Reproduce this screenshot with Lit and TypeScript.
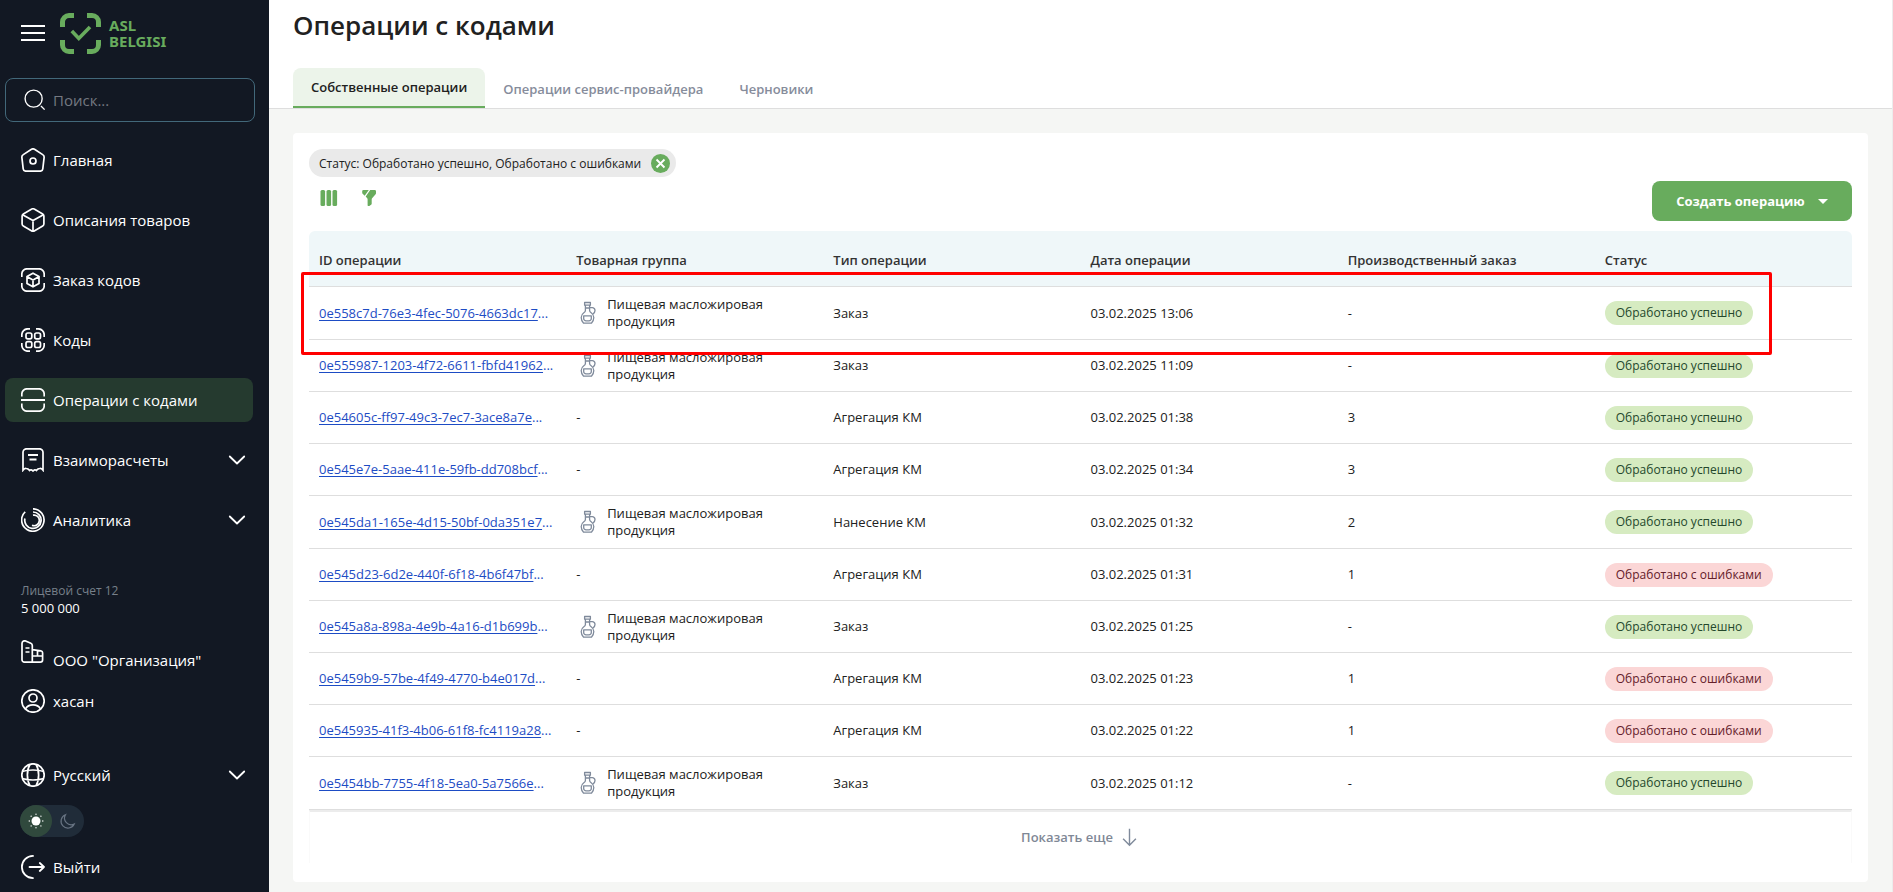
import { LitElement, html, css, svg, TemplateResult } from "lit";
import { customElement, state } from "lit/decorators.js";
import { classMap } from "lit/directives/class-map.js";

interface Operation {
  id: string;
  group: boolean;
  type: string;
  date: string;
  order: string;
  ok: boolean;
}

const OPERATIONS: Operation[] = [
  { id: "0e558c7d-76e3-4fec-5076-4663dc17", group: true, type: "Заказ", date: "03.02.2025 13:06", order: "-", ok: true },
  { id: "0e555987-1203-4f72-6611-fbfd41962", group: true, type: "Заказ", date: "03.02.2025 11:09", order: "-", ok: true },
  { id: "0e54605c-ff97-49c3-7ec7-3ace8a7e", group: false, type: "Агрегация КМ", date: "03.02.2025 01:38", order: "3", ok: true },
  { id: "0e545e7e-5aae-411e-59fb-dd708bcf", group: false, type: "Агрегация КМ", date: "03.02.2025 01:34", order: "3", ok: true },
  { id: "0e545da1-165e-4d15-50bf-0da351e7", group: true, type: "Нанесение КМ", date: "03.02.2025 01:32", order: "2", ok: true },
  { id: "0e545d23-6d2e-440f-6f18-4b6f47bf", group: false, type: "Агрегация КМ", date: "03.02.2025 01:31", order: "1", ok: false },
  { id: "0e545a8a-898a-4e9b-4a16-d1b699b", group: true, type: "Заказ", date: "03.02.2025 01:25", order: "-", ok: true },
  { id: "0e5459b9-57be-4f49-4770-b4e017d", group: false, type: "Агрегация КМ", date: "03.02.2025 01:23", order: "1", ok: false },
  { id: "0e545935-41f3-4b06-61f8-fc4119a28", group: false, type: "Агрегация КМ", date: "03.02.2025 01:22", order: "1", ok: false },
  { id: "0e5454bb-7755-4f18-5ea0-5a7566e", group: true, type: "Заказ", date: "03.02.2025 01:12", order: "-", ok: true },
];

const COLUMNS = ["ID операции", "Товарная группа", "Тип операции", "Дата операции", "Производственный заказ", "Статус"];

const icon = (body: TemplateResult, cls = "icon") =>
  html`<svg class=${cls} viewBox="0 0 24 24" aria-hidden="true">${body}</svg>`;

const corners = svg`<path d="M.8 9V6.8a6 6 0 0 1 6-6H9M15 .8h2.200a6 6 0 0 1 6 6V9M23.200 15v2.200a6 6 0 0 1-6 6H15M9 23.200H6.800a6 6 0 0 1-6-6V15"/>`;

const ICONS = {
  menu: svg`<path stroke-width="2" d="M0 5h24M0 12h24M0 19h24" />`,
  search: svg`<circle cx="10.500" cy="10.500" r="9.300"/><path d="m18.500 18.500 4 4"/>`,
  home: svg`<path d="M10.500 1.300 2.300 6.600a3 3 0 0 0-1.400 3L2.200 20.800a2.800 2.800 0 0 0 2.800 2.400h14a2.800 2.800 0 0 0 2.800-2.400L23.100 9.600a3 3 0 0 0-1.400-3L13.500 1.300a2.800 2.800 0 0 0-3 0Z"/><circle cx="12" cy="13" r="3"/>`,
  box: svg`<path d="M10.800 1.100 2.300 6a2.400 2.400 0 0 0-1.200 2v8a2.400 2.400 0 0 0 1.200 2l8.500 4.900a2.400 2.400 0 0 0 2.400 0l8.500-4.900a2.400 2.400 0 0 0 1.200-2V8a2.400 2.400 0 0 0-1.200-2l-8.500-4.900a2.400 2.400 0 0 0-2.400 0ZM1.600 6.800 12 12.500l10.400-5.700M12 12.500v10.700"/>`,
  order: svg`<path d="M.8 9V6a5.200 5.200 0 0 1 5.200-5.200h12A5.200 5.200 0 0 1 23.200 6v3M.8 15v3A5.200 5.200 0 0 0 6 23.200h12a5.200 5.200 0 0 0 5.200-5.200v-3M12 5.300l6 3.300v6.800l-6 3.400-6-3.400V8.600ZM6.200 8.800 12 12l5.800-3.200M12 12v6.500"/>`,
  codes: svg`${corners}<g><rect x="5" y="5" width="5.800" height="5.800" rx="1.800"/><rect x="13.700" y="5" width="5.800" height="5.800" rx="1.800"/><rect x="5" y="13.700" width="5.800" height="5.800" rx="1.800"/><rect x="13.700" y="13.700" width="5.800" height="5.800" rx="1.800"/></g>`,
  operations: svg`<path d="M.8 8.500V6A5.200 5.200 0 0 1 6 .8h12A5.200 5.200 0 0 1 23.200 6v2.500M.8 15.500V18A5.200 5.200 0 0 0 6 23.200h12a5.200 5.200 0 0 0 5.200-5.200v-2.500"/><path stroke-width="2" d="M0 12h24"/>`,
  receipt: svg`<path d="M5.500.8h13a3.500 3.500 0 0 1 3.500 3.500v17.900q-1.600-2-3.300-1.700-1.800 0-3.300 1.900-1.600-1.500-3.400.6-1.800-2.100-3.400-.6-1.500-1.900-3.300-1.900-1.700-.3-3.300 1.700V4.300A3.500 3.500 0 0 1 5.500.8Z"/><path stroke-width="2" d="M7 7h10M8.500 11.500h7"/>`,
  analytics: svg`<path d="M4.200 3.800A11.200 11.200 0 1 0 12 .8M3.900 10.500A8.200 8.200 0 1 0 12 4M11 17.300A5.300 5.300 0 1 0 12 7.200M12 10"/>`,
  chevron: svg`<path stroke-width="1.800" stroke-linecap="round" stroke-linejoin="round" d="m4.800 8.500 7.200 7 7.200-7"/>`,
  org: svg`<path d="M11.300 22.200V5.500c0-1-.6-1.800-1.500-2.200L4.600 1A2.600 2.600 0 0 0 1 3.400v16.400a2.400 2.400 0 0 0 2.400 2.400h15.800a2.400 2.400 0 0 0 2.400-2.400v-7a2 2 0 0 0-1.700-2l-8.600-1.200M16.500 10.300V16M11.300 16h10M4.500 8h4M4.500 12h4"/>`,
  user: svg`<circle cx="12" cy="12" r="11.200"/><circle cx="12" cy="9" r="4"/><path d="M4.500 19.800c1.400-2.600 4.200-4 7.500-4s6.100 1.400 7.500 4"/>`,
  globe: svg`<circle cx="12" cy="12" r="11.200"/><path d="M9 1.200C5.500 7 5.500 17 9 22.800M15 1.200c3.500 5.800 3.500 15.800 0 21.600M1.200 8.500c6-2 15.600-2 21.600 0M1.200 15.500c6 2 15.600 2 21.600 0"/>`,
  logout: svg`<path stroke-width="1.800" stroke-linecap="round" stroke-linejoin="round" d="M12 .9a11.100 11.100 0 0 0 0 22.200M8.500 12H23M18.800 8l4.200 4-4.200 4"/>`,
  sun: svg`<circle cx="12" cy="12" r="6" fill="#fff" stroke="none"/><path stroke-width="1.800" stroke-linecap="round" d="M12 3v.1M12 21v.1M3 12h.1M21 12h.1M5.500 5.500h.1M18.500 5.500h.1M5.500 18.500h.1M18.500 18.500h.1"/>`,
  moon: svg`<path d="M9 4.500a8.300 8.300 0 1 0 10.500 11.200A8 8 0 0 1 9 4.500Z"/>`,
  columns: svg`<g stroke="none" fill="#68ac5d"><rect x="3.500" y="4" width="4.600" height="16" rx="1.500"/><rect x="9.500" y="4" width="4.600" height="16" rx="1.500"/><rect x="15.500" y="4" width="4.600" height="16" rx="1.500"/></g>`,
  funnel: svg`<path stroke="none" fill="#68ac5d" d="M6.500 4h5.300L7.700 9.700 5.600 7.800Q5.200 7.300 5.200 6.700V5.200Q5.200 4 6.500 4Zm6.700 0h4.500Q19 4 19 5.200v2q0 .6-.4 1.100l-3.500 3.900q-.4.500-.4 1.200v4.300q0 .7-.6 1.100l-1.800 1.200q-1.700.5-1.700-1.100v-5.500q0-.7-.4-1.200l-1.500-1.600Z"/>`,
  oil: svg`<g stroke="#7f8a9b" stroke-width="1.300" stroke-linejoin="round"><path d="M8.600 1.500h5.800v2.700H8.600ZM9.400 4.200v5.200c0 1-.7 1.700-1.600 2.400A6 6 0 0 0 5.200 16.500c0 2.300.9 4.200 2.400 5.700h7.800c1.500-1.500 2.400-3.400 2.400-5.700a6 6 0 0 0-2.600-4.700c-.9-.7-1.600-1.400-1.600-2.400V4.200M9.400 7h4.200"/><path d="M13.800 6.700h2.500A2.700 2.700 0 0 1 19 9.400c0 1.700-.9 2.700-2 3.600M7.700 14.800h7.600v2.700a2.300 2.300 0 0 1-2.300 2.300h-3a2.300 2.300 0 0 1-2.300-2.300Z"/></g>`,
  down: svg`<path stroke="#7f8a9b" stroke-width="1.600" d="M12 2v19M4.700 13.500l7.300 7.300 7.300-7.300"/>`,
};

@customElement("app-root")
export class AppRoot extends LitElement {
  static styles = css`
    :host {
      display: flex;
      min-height: 100vh;
      box-sizing: border-box;
      background: #f5f6f4;
      color: #212121;
      font: 13px/17px "Open Sans", "Noto Sans", sans-serif;
    }
    * { box-sizing: border-box; }
    button, input, select { font: inherit; color: inherit; background: none; border: 0; padding: 0; margin: 0; }
    button { cursor: pointer; }
    a { color: inherit; text-decoration: none; }
    svg { fill: none; stroke: currentColor; stroke-width: 1.700; flex: none; display: block; }
    .icon { width: 24px; height: 24px; }

    .sidebar { width: 269px; flex: none; background: #121823; color: #fff; font-size: 15px; line-height: 24px; }
    .brand { display: flex; align-items: center; height: 66px; padding-left: 21px; gap: 15px; }
    .logo { display: flex; align-items: center; gap: 8px; color: #68ac5d; }
    .mark { width: 41px; height: 41px; }
    .wordmark { display: flex; flex-direction: column; font: 700 15px/16px "Noto Sans", sans-serif; }
    .search { display: flex; align-items: center; gap: 7px; height: 44px; margin: 12px 14px 16px 5px; padding-left: 18px; border: 1px solid #42687a; border-radius: 8px; }
    .search .icon { width: 22px; height: 22px; stroke-width: 1.500; }
    .search input { flex: 1; min-width: 0; outline: 0; }
    .search input::placeholder { color: #747881; opacity: 1; }
    .nav { display: flex; flex-direction: column; gap: 16px; }
    .item { display: flex; align-items: center; gap: 8px; height: 44px; margin: 0 16px 0 5px; padding: 0 4px 0 16px; border-radius: 8px; text-align: left; }
    .item.active { background: #253a2f; }
    .grow { flex: 1; min-width: 0; }
    .account { margin: 40px 0 24px 21px; font-size: 13px; line-height: 16px; }
    .account-name { font-size: 12px; line-height: 18px; color: #77808a; }
    .org { display: flex; gap: 8px; padding-left: 21px; margin-bottom: 7px; }
    .org-name { padding-top: 8px; }
    .language { margin-top: 30px; }
    .language select { appearance: none; }
    .language option { color: #212121; }
    .theme { display: flex; width: 64px; height: 32px; margin: 8px 0 8px 20px; border-radius: 16px; background: #202c39; }
    .knob { display: grid; place-items: center; width: 32px; height: 32px; border-radius: 50%; }
    .knob.on { background: #30493d; }
    .sun { width: 18px; height: 18px; }
    .moon { width: 20px; height: 20px; color: #687483; stroke-width: 1.400; }

    .main { flex: 1; min-width: 0; border-right: 1px solid #ececec; }
    .top { background: #fff; border-bottom: 1px solid #dedede; padding: 9px 24px 0; }
    h1 { margin: 0 0 27px; font-size: 26px; line-height: 32px; font-weight: 600; }
    .tabs { display: flex; }
    .tab { height: 40px; padding: 2px 18px 0; border-radius: 8px 8px 0 0; font-weight: 600; color: #868c9b; }
    .tab.active { padding-top: 0; border-bottom: 2px solid #68ac5d; background: #ecf4ea; color: #212121; }

    .card { margin: 24px 24px 10px; padding: 16px 16px 19px; background: #fff; border-radius: 4px; }
    .chip { display: inline-flex; align-items: center; gap: 10px; height: 28px; padding: 0 6px 0 10px; border-radius: 14px; background: #eaeaea; font-size: 12px; vertical-align: top; }
    .close { width: 19px; height: 19px; border-radius: 50%; background: #68ac5d; color: #fff; }
    .close .icon { width: 19px; height: 19px; stroke-width: 2.400; }
    .toolbar { display: flex; align-items: flex-start; gap: 16px; margin: 4px 0 10px; padding-left: 8px; }
    .tool { margin-top: 5px; }
    .create { display: flex; align-items: center; justify-content: center; gap: 13px; width: 200px; height: 40px; margin-left: auto; border-radius: 8px; background: #68ac5d; color: #fff; font-weight: 700; }
    .caret { width: 10px; height: 5px; fill: #fff; stroke: none; }

    .table-wrap { position: relative; }
    .highlight { position: absolute; left: -8px; right: 80px; top: 41px; height: 83px; border: 3px solid #f00; border-radius: 2px; pointer-events: none; }
    table { width: 100%; table-layout: fixed; border-collapse: separate; border-spacing: 0; }
    th, td { padding: 0 10px; text-align: left; border-bottom: 1px solid #dedede; }
    th { height: 56px; padding-top: 3px; background: #eff7f9; font-weight: 600; color: #333; }
    th:first-child { border-top-left-radius: 6px; }
    th:last-child { border-top-right-radius: 6px; }
    td { height: 52px; }
    tr:first-child td, tr:nth-child(5) td, tr:last-child td { height: 53px; }
    .id { white-space: nowrap; overflow: hidden; color: #1d4cc4; }
    .id a { text-decoration: underline; text-underline-offset: 2px; }
    .group { display: flex; align-items: center; gap: 7px; }
    .badge { display: inline-block; padding: 0 11px; border-radius: 12px; font-size: 12px; line-height: 24px; white-space: nowrap; vertical-align: middle; }
    .badge.ok { background: #d6ebc1; color: #24482c; }
    .badge.fail { background: #fbd6d6; color: #64202a; }
    .more { display: flex; align-items: center; justify-content: center; gap: 6px; width: 100%; height: 53px; color: #7f8896; font-weight: 600; border: 1px solid #fafafa; border-top: 2px solid #ececec; border-bottom: 0; }
    .more .icon { width: 21px; height: 21px; }
  `;

  @state() private tab = 0;
  @state() private dark = false;

  private tabs = ["Собственные операции", "Операции сервис-провайдера", "Черновики"];

  private link(glyph: TemplateResult, label: string, active = false) {
    return html`<a href="#" class=${classMap({ item: true, active })}>${icon(glyph)}<span>${label}</span></a>`;
  }

  private section(glyph: TemplateResult, label: string) {
    return html`<button class="item" aria-expanded="false">${icon(glyph)}<span class="grow">${label}</span>${icon(ICONS.chevron)}</button>`;
  }

  private row(o: Operation) {
    return html`<tr>
      <td><div class="id"><a href="#">${o.id}</a>...</div></td>
      <td>${o.group ? html`<div class="group">${icon(ICONS.oil)}<span>Пищевая масложировая продукция</span></div>` : "-"}</td>
      <td>${o.type}</td>
      <td>${o.date}</td>
      <td>${o.order}</td>
      <td><span class=${classMap({ badge: true, ok: o.ok, fail: !o.ok })}>${o.ok ? "Обработано успешно" : "Обработано с ошибками"}</span></td>
    </tr>`;
  }

  render() {
    return html`
      <aside class="sidebar">
        <div class="brand">
          <button aria-label="Меню">${icon(ICONS.menu)}</button>
          <div class="logo">
            <svg class="mark" viewBox="0 0 41 41" aria-hidden="true">
              <path stroke-width="5" d="M2.500 14V9a6.500 6.500 0 0 1 6.500-6.500h5M27 2.500h5A6.500 6.500 0 0 1 38.500 9v5M38.500 27v5a6.500 6.500 0 0 1-6.500 6.500h-5M14 38.500H9A6.500 6.500 0 0 1 2.500 32v-5"/>
              <path stroke-width="3.600" d="m11.800 18 7 7.500L30 14"/>
            </svg>
            <div class="wordmark"><span>ASL</span><span>BELGISI</span></div>
          </div>
        </div>
        <label class="search">${icon(ICONS.search)}<input type="search" placeholder="Поиск..." aria-label="Поиск"></label>
        <nav class="nav">
          ${this.link(ICONS.home, "Главная")}
          ${this.link(ICONS.box, "Описания товаров")}
          ${this.link(ICONS.order, "Заказ кодов")}
          ${this.link(ICONS.codes, "Коды")}
          ${this.link(ICONS.operations, "Операции с кодами", true)}
          ${this.section(ICONS.receipt, "Взаиморасчеты")}
          ${this.section(ICONS.analytics, "Аналитика")}
        </nav>
        <div class="account"><div class="account-name">Лицевой счет 12</div><div>5 000 000</div></div>
        <a href="#" class="org">${icon(ICONS.org)}<span class="org-name">ООО "Организация"</span></a>
        ${this.link(ICONS.user, "хасан")}
        <label class="item language">${icon(ICONS.globe)}<select class="grow" aria-label="Язык"><option>Русский</option></select>${icon(ICONS.chevron)}</label>
        <button class="theme" role="switch" aria-label="Тёмная тема" aria-checked=${this.dark} @click=${() => (this.dark = !this.dark)}>
          <span class=${classMap({ knob: true, on: !this.dark })}>${icon(ICONS.sun, "sun")}</span>
          <span class=${classMap({ knob: true, on: this.dark })}>${icon(ICONS.moon, "moon")}</span>
        </button>
        ${this.link(ICONS.logout, "Выйти")}
      </aside>
      <main class="main">
        <header class="top">
          <h1>Операции с кодами</h1>
          <div class="tabs" role="tablist">
            ${this.tabs.map((t, i) => html`<button role="tab" aria-selected=${i === this.tab} class=${classMap({ tab: true, active: i === this.tab })} @click=${() => (this.tab = i)}>${t}</button>`)}
          </div>
        </header>
        <section class="card">
          <div class="chip"><span>Статус: Обработано успешно, Обработано с ошибками</span><button class="close" aria-label="Сбросить">${icon(svg`<path d="m7 7 10 10M17 7 7 17"/>`)}</button></div>
          <div class="toolbar">
            <button class="tool" aria-label="Столбцы">${icon(ICONS.columns)}</button>
            <button class="tool" aria-label="Фильтр">${icon(ICONS.funnel)}</button>
            <button class="create">Создать операцию<svg class="caret" viewBox="0 0 8 4" aria-hidden="true"><path d="M0 0h8L4 4Z"/></svg></button>
          </div>
          <div class="table-wrap">
            <table>
              <thead><tr>${COLUMNS.map((c) => html`<th scope="col">${c}</th>`)}</tr></thead>
              <tbody>${OPERATIONS.map((o) => this.row(o))}</tbody>
            </table>
            <div class="highlight"></div>
          </div>
          <button class="more">Показать еще${icon(ICONS.down)}</button>
        </section>
      </main>
    `;
  }
}
